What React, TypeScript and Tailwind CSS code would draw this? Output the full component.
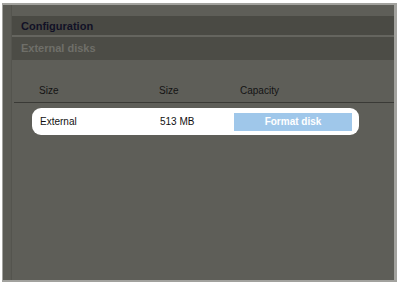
export default function App() {
  return (
    <div className="w-[399px] h-[286px] bg-white pt-[3px] pl-[2px] font-['Liberation_Sans',Arial,sans-serif]">
      <div className="w-[395px] h-[279px] border-t-2 border-l border-r-[3px] border-b-2 border-[#a2a29e] bg-[#5e5e58] flex">
        {/* left strip */}
        <div className="w-[9px] border-r border-[#54544e] bg-[#5b5b55]" />

        <div className="flex-1 flex flex-col pt-[11px]">
          <div className="h-[19px] bg-[#4a4a44] pl-[9px] pt-[2px] flex items-center text-[11px] font-bold text-[#111126]">
            Configuration
          </div>
          <div className="h-[2px] bg-[#65655f]" />
          <div className="h-[23px] bg-[#4c4c46] pl-[9px] flex items-center text-[11px] font-bold text-[#6f6f69]">
            External disks
          </div>

          {/* column headers */}
          <div className="h-[42px] flex items-end pb-[4px] text-[10px] text-[#141414]">
            <span className="ml-[27px] w-[120px]">Size</span>
            <span className="w-[81px]">Size</span>
            <span>Capacity</span>
          </div>
          <div className="h-[1px] bg-[#3a3a36] ml-[2px]" />

          <div className="mt-[5px] ml-[20px] w-[327px] h-[27px] rounded-[9px] bg-white flex items-center text-[10px] text-[#111]">
            <span className="ml-[8px] w-[120px]">External</span>
            <span className="w-[74px]">513 MB</span>
            <div className="w-[118px] h-[18px] bg-[#9fc7ea] flex items-center justify-center text-[10px] font-bold text-white">
              Format disk
            </div>
          </div>
        </div>
      </div>
    </div>
  );
}
